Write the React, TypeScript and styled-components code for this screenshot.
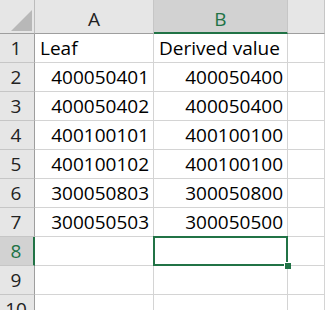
import React from "react";
import styled, { createGlobalStyle, css } from "styled-components";

const GlobalStyle = createGlobalStyle`
  html, body {
    margin: 0;
    padding: 0;
    background: #ffffff;
    overflow: hidden;
  }
  body {
    font-family: "Open Sans", "Liberation Sans", sans-serif;
  }
`;

const green = "#217346";

const rows: [string, string][] = [
  ["Leaf", "Derived value"],
  ["400050401", "400050400"],
  ["400050402", "400050400"],
  ["400100101", "400100100"],
  ["400100102", "400100100"],
  ["300050803", "300050800"],
  ["300050503", "300050500"],
  ["", ""],
  ["", ""],
  ["", ""],
];

const selectedRow = 8;

const Sheet = styled.div`
  display: grid;
  grid-template-columns: 35px 119px 134px 1fr;
  grid-auto-rows: 29px;
  grid-template-rows: 34px;
  width: 325px;
  height: 310px;
  overflow: hidden;
  font-size: 19px;
  color: #000;
`;

const Corner = styled.div`
  background: #e6e6e6;
  border-right: 1px solid #bcbcbc;
  border-bottom: 1px solid #9e9e9e;
  box-sizing: border-box;
  display: flex;
  align-items: flex-end;
  justify-content: flex-end;
  padding: 0 2px 2px 0;
`;

const ColHeader = styled.div<{ $selected?: boolean }>`
  background: ${({ $selected }) => ($selected ? "#d2d2d2" : "#e6e6e6")};
  color: ${({ $selected }) => ($selected ? green : "#222")};
  border-right: 1px solid #c6c6c6;
  border-bottom: ${({ $selected }) => ($selected ? `2px solid ${green}` : "1px solid #9e9e9e")};
  box-sizing: border-box;
  display: flex;
  align-items: flex-end;
  justify-content: center;
  padding-bottom: ${({ $selected }) => ($selected ? "3px" : "4px")};
  font-size: 19px;
  line-height: 1;
`;

const RowHeader = styled.div<{ $selected?: boolean }>`
  background: ${({ $selected }) => ($selected ? "#d2d2d2" : "#e6e6e6")};
  color: ${({ $selected }) => ($selected ? green : "#222")};
  border-bottom: 1px solid #c6c6c6;
  border-right: ${({ $selected }) => ($selected ? `2px solid ${green}` : "1px solid #9e9e9e")};
  box-sizing: border-box;
  display: flex;
  align-items: flex-end;
  justify-content: center;
  padding-bottom: 4px;
  padding-right: ${({ $selected }) => ($selected ? "1px" : "2px")};
  line-height: 1;
`;

const Cell = styled.div<{ $numeric?: boolean; $active?: boolean }>`
  position: relative;
  background: #fff;
  border-right: 1px solid #d4d4d4;
  border-bottom: 1px solid #d4d4d4;
  box-sizing: border-box;
  display: flex;
  align-items: flex-end;
  justify-content: ${({ $numeric }) => ($numeric ? "flex-end" : "flex-start")};
  padding: 0 4px 4px 5px;
  line-height: 1;
  white-space: nowrap;
  ${({ $active }) =>
    $active &&
    css`
      z-index: 2;
      margin: -1px 0 0 -1px;
      border: 2px solid ${green};
    `}
`;

const FillHandle = styled.span`
  position: absolute;
  right: -5px;
  bottom: -5px;
  width: 6px;
  height: 6px;
  background: ${green};
  border-left: 1px solid #fff;
  border-top: 1px solid #fff;
`;

const App = () => {
  return (
    <>
      <GlobalStyle />
      <Sheet>
        <Corner>
          <svg width="21" height="21" viewBox="0 0 21 21">
            <polygon points="21,0 21,21 0,21" fill="#b8b8b8" />
          </svg>
        </Corner>
        <ColHeader>A</ColHeader>
        <ColHeader $selected>B</ColHeader>
        <ColHeader />
        {rows.map(([a, b], i) => {
          const n = i + 1;
          const active = n === selectedRow;
          return (
            <React.Fragment key={n}>
              <RowHeader $selected={active}>{n}</RowHeader>
              <Cell $numeric={/^\d+$/.test(a)}>{a}</Cell>
              <Cell $numeric={/^\d+$/.test(b)} $active={active}>
                {b}
                {active && <FillHandle />}
              </Cell>
              <Cell />
            </React.Fragment>
          );
        })}
      </Sheet>
    </>
  );
};

export default App;
